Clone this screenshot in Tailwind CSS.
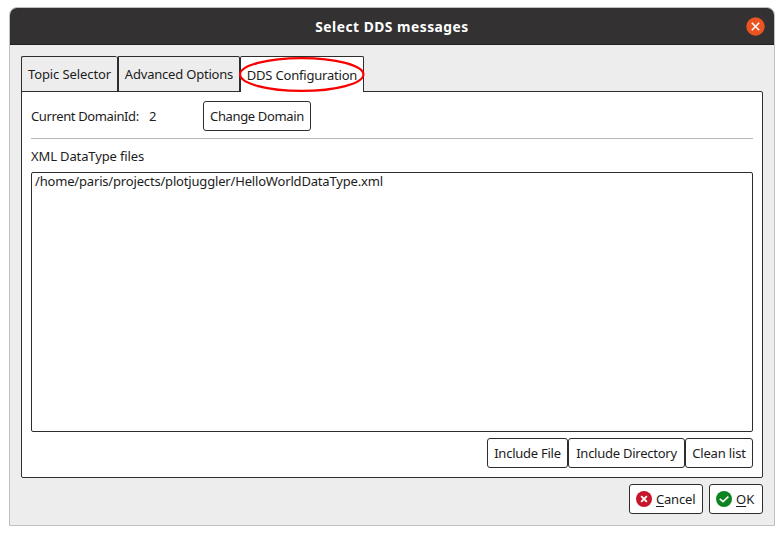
<!DOCTYPE html>
<html lang="en">
<head>
<meta charset="utf-8">
<title>Select DDS messages</title>
<script src="https://cdn.jsdelivr.net/npm/@tailwindcss/browser@4"></script>
</head>
<body class="bg-white w-[784px] h-[535px] overflow-hidden pl-[9px] pt-[7px] font-['Noto_Sans',sans-serif] text-[13px] leading-[18px] text-[#1c1c1c] whitespace-nowrap">
<main class="w-[766px] h-[519px] bg-[#ededed] border border-[#bfbfbf] rounded-t-[8px] flex flex-col overflow-hidden">
  <header class="h-[37px] shrink-0 bg-[#333132] border-b border-[#1f1f1f] grid grid-cols-[1fr_auto_1fr] items-center pr-[9px]">
    <span></span>
    <h1 class="font-bold text-white text-[13.8px] tracking-[0.5px] pt-px pl-[9px]">Select DDS messages</h1>
    <button class="justify-self-end" aria-label="Close">
      <svg class="block" width="19" height="19" viewBox="0 0 19 19"><circle cx="9.5" cy="9.5" r="9.2" fill="#e95420"/><path d="M5.8 5.8l7.4 7.4M13.2 5.8l-7.4 7.4" stroke="#fff" stroke-width="1.5"/></svg>
    </button>
  </header>
  <div class="px-[11px] pt-[11px] flex flex-col">
    <nav class="flex h-[36px] relative z-10 -mb-px">
      <button class="w-[96px] border border-r-0 border-[#2d2d2d] rounded-t-[2px] text-center tracking-[-0.1px]"><span>Topic Selector</span></button>
      <button class="w-[123px] border border-l-2 border-[#2d2d2d] rounded-t-[2px] text-center tracking-[-0.2px]"><span>Advanced Options</span></button>
      <button class="w-[124px] bg-white border-t border-x border-[#2d2d2d] rounded-t-[2px] relative pt-px pb-px tracking-[-0.2px]"><span>DDS Configuration</span>
        <svg class="absolute -left-[2px] top-0" width="126" height="36" viewBox="0 0 126 36"><ellipse cx="62.7" cy="17.5" rx="61.7" ry="16.4" fill="none" stroke="#f80000" stroke-width="2.2"/></svg>
      </button>
    </nav>
    <section class="h-[387px] bg-white border border-[#2d2d2d] rounded-b-[2px] rounded-tr-[2px] px-[9px] pt-[9px]">
      <div class="flex items-center h-[30px]">
        <span class="w-[118px] tracking-[-0.38px]">Current DomainId:</span><span class="w-[54px]">2</span>
        <button class="w-[108px] h-[30px] border border-[#2d2d2d] rounded-[3px] tracking-[-0.35px]"><span>Change Domain</span></button>
      </div>
      <hr class="mt-[7px] border-0 h-px bg-[#b6b6b6]">
      <p class="mt-[8px] h-[25px] tracking-[-0.13px]">XML DataType files</p>
      <div class="h-[260px] border border-[#2d2d2d] rounded-[2px] pl-[3px]"><p class="leading-[16px] tracking-[-0.175px]">/home/paris/projects/plotjuggler/HelloWorldDataType.xml</p></div>
      <div class="mt-[6px] flex justify-end h-[30px]">
        <button class="w-[81px] border border-[#2d2d2d] rounded-[3px] tracking-[-0.25px]"><span>Include File</span></button>
        <button class="w-[117px] border border-[#2d2d2d] rounded-[3px] tracking-[-0.25px]"><span>Include Directory</span></button>
        <button class="w-[68px] border border-[#2d2d2d] rounded-[3px] tracking-[-0.15px]"><span>Clean list</span></button>
      </div>
    </section>
    <footer class="mt-[6px] flex justify-end gap-[6px] h-[30px]">
      <button class="w-[74px] bg-white border border-[#2d2d2d] rounded-[3px] flex items-center pl-[6px] gap-[4px] tracking-[-0.2px]">
        <svg class="shrink-0" width="16" height="16" viewBox="0 0 16 16"><circle cx="8" cy="8" r="8" fill="#c7162b"/><path d="M5.2 5.2l5.6 5.6M10.8 5.2l-5.6 5.6" stroke="#fff" stroke-width="1.9"/></svg>
        <span><u class="underline-offset-2">C</u>ancel</span>
      </button>
      <button class="w-[54px] bg-white border border-[#2d2d2d] rounded-[3px] flex items-center pl-[6px] gap-[4px]">
        <svg class="shrink-0" width="16" height="16" viewBox="0 0 16 16"><circle cx="8" cy="8" r="8" fill="#0e8420"/><path d="M3.8 7.8l3.2 2.9 5.4-5.1" fill="none" stroke="#fff" stroke-width="1.6"/></svg>
        <span><u class="underline-offset-2">O</u>K</span>
      </button>
    </footer>
  </div>
</main>
</body>
</html>
